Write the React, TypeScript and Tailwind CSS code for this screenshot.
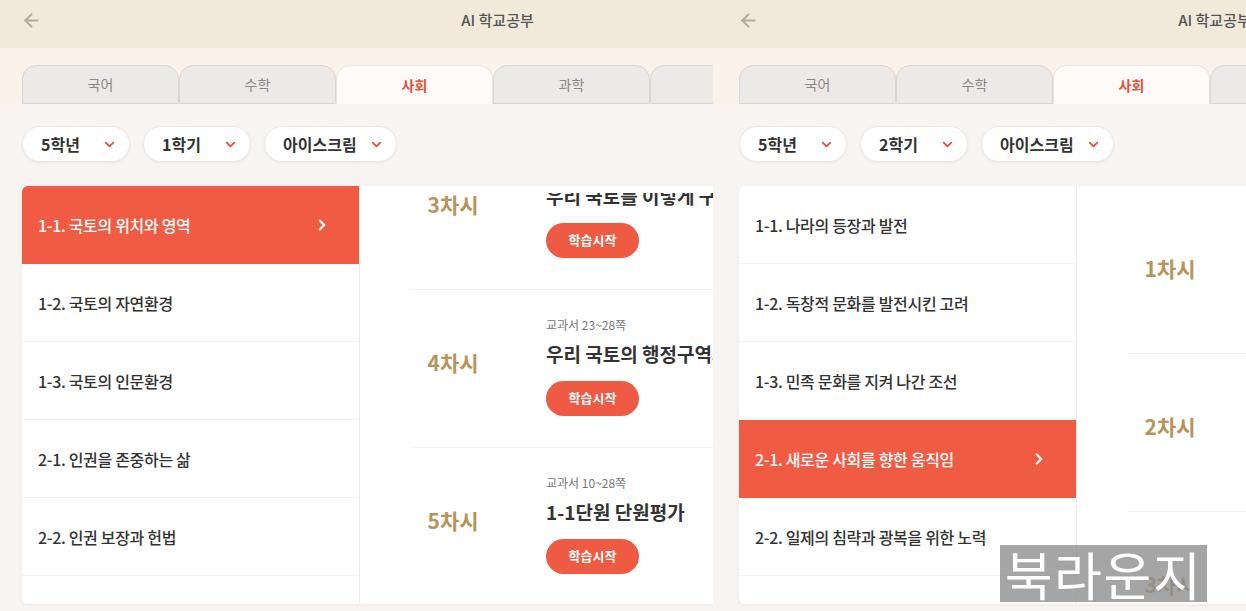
import { ArrowLeft, ChevronDown, ChevronRight } from "lucide-react";

interface Session {
  no: number;
  page: string;
  title: string;
}

interface ScreenProps {
  semester: string;
  units: string[];
  activeUnit: number;
  sessions: Session[];
  listOffset: string;
}

const TABS = ["국어", "수학", "사회", "과학", "영어"];

function Screen({ semester, units, activeUnit, sessions, listOffset }: ScreenProps) {
  return (
    <div className="w-[995px] h-[611px] flex flex-col">
      {/* 상단 헤더 */}
      <div className="h-[48px] shrink-0 bg-[#f3e9db] grid grid-cols-[60px_1fr_60px] items-center pb-[8px]">
        <div className="pl-[21px] text-[#b5ab9c]">
          <ArrowLeft size={21} strokeWidth={2.4} />
        </div>
        <div className="text-center text-[15px] font-medium text-[#555]">AI 학교공부</div>
        <div />
      </div>

      {/* 과목 탭 */}
      <div className="h-[56px] shrink-0 bg-[#faf3ea] pt-[17px] px-[22px] flex">
        {TABS.map((tab) => {
          const active = tab === "사회";
          return (
            <div
              key={tab}
              className={`w-[157px] h-[39px] shrink-0 rounded-t-[14px] flex items-center justify-center text-[14px] ${
                active
                  ? "bg-[#fdfaf7] border border-b-0 border-[#ebe5df] text-[#e5513b] font-semibold"
                  : "bg-[#ebeae8] border border-[#d9d6d3] text-[#8a8784]"
              }`}
            >
              {tab}
            </div>
          );
        })}
      </div>

      {/* 본문 */}
      <div className="flex-1 bg-[#f8f4f1] px-[22px] pt-[22px]">
        <div className="flex gap-[13px]">
          {[
            { label: "5학년", w: "w-[108px]" },
            { label: semester, w: "w-[108px]" },
            { label: "아이스크림", w: "w-[133px]" },
          ].map((p) => (
            <div
              key={p.label}
              className={`${p.w} h-[36px] rounded-full bg-white border border-[#eee7e2] shadow-[0_1px_3px_rgba(0,0,0,0.05)] flex items-center justify-between pl-[18px] pr-[12px]`}
            >
              <span className="text-[16px] font-semibold text-[#333]">{p.label}</span>
              <ChevronDown size={15} strokeWidth={3} className="text-[#e0533d]" />
            </div>
          ))}
        </div>

        <div className="mt-[24px] h-[418px] bg-white rounded-md shadow-[0_1px_4px_rgba(0,0,0,0.05)] flex overflow-hidden">
          {/* 단원 목록 */}
          <div className="w-[337px] shrink-0 flex flex-col">
            {units.map((u, i) => (
              <div
                key={u}
                className={`h-[78px] shrink-0 flex items-center justify-between pl-[16px] pr-[28px] border-b ${
                  i === activeUnit
                    ? "bg-[#f05b44] border-[#f05b44] text-white"
                    : "border-[#f4f1ef] text-[#333]"
                }`}
              >
                <span className="text-[16px] font-medium tracking-[-0.02em] whitespace-nowrap">{u}</span>
                {i === activeUnit && <ChevronRight size={18} strokeWidth={3} />}
              </div>
            ))}
          </div>

          {/* 차시 목록 */}
          <div className="flex-1 border-l border-[#eeeae7] pt-[7px] flex flex-col">
            <div className="flex-1 overflow-hidden">
              <div className={listOffset}>
                {sessions.map((s) => (
                  <div key={s.no}>
                    <div className="h-[157px] flex">
                      <div className="w-[186px] shrink-0 flex items-center justify-center pb-[12px] text-[21px] font-bold text-[#b8935a]">
                        {s.no}차시
                      </div>
                      <div className="flex flex-col justify-center pb-[6px] whitespace-nowrap">
                        <div className="text-[12px] leading-[18px] text-[#777]">{s.page}</div>
                        <div className="mt-[6px] text-[19px] leading-[28px] font-semibold text-[#333]">{s.title}</div>
                        <button className="mt-[13px] w-[93px] h-[35px] rounded-full bg-[#ef5a43] text-white text-[13px] font-bold">
                          학습시작
                        </button>
                      </div>
                    </div>
                    <div className="ml-[50px] h-px bg-[#f4f1ef]" />
                  </div>
                ))}
              </div>
            </div>
          </div>
        </div>
      </div>
    </div>
  );
}

export default function App() {
  return (
    <div className="relative w-[1246px] h-[611px] overflow-hidden flex bg-[#f8f4f1] font-['Noto_Sans_CJK_KR','Noto_Sans',sans-serif]">
      <div className="w-[713px] shrink-0 overflow-hidden">
        <Screen
          semester="1학기"
          units={[
            "1-1. 국토의 위치와 영역",
            "1-2. 국토의 자연환경",
            "1-3. 국토의 인문환경",
            "2-1. 인권을 존중하는 삶",
            "2-2. 인권 보장과 헌법",
            "2-3. 헌법에서 정한 권리와 의무",
          ]}
          activeUnit={0}
          sessions={[
            { no: 3, page: "교과서 18~22쪽", title: "우리 국토를 이렇게 구분해요" },
            { no: 4, page: "교과서 23~28쪽", title: "우리 국토의 행정구역과 도시" },
            { no: 5, page: "교과서 10~28쪽", title: "1-1단원 단원평가" },
          ]}
          listOffset="-mt-[61px]"
        />
      </div>

      <div className="w-[4px] shrink-0 flex flex-col">
        <div className="h-[48px] bg-[#f3e9db]" />
        <div className="h-[56px] bg-[#faf3ea]" />
        <div className="flex-1" />
      </div>

      <div className="flex-1 overflow-hidden">
        <Screen
          semester="2학기"
          units={[
            "1-1. 나라의 등장과 발전",
            "1-2. 독창적 문화를 발전시킨 고려",
            "1-3. 민족 문화를 지켜 나간 조선",
            "2-1. 새로운 사회를 향한 움직임",
            "2-2. 일제의 침략과 광복을 위한 노력",
            "2-3. 대한민국 정부의 수립",
          ]}
          activeUnit={3}
          sessions={[
            { no: 1, page: "교과서 58~61쪽", title: "새로운 사회를 향한 움직임" },
            { no: 2, page: "교과서 62~65쪽", title: "개항과 근대 문물의 수용" },
            { no: 3, page: "교과서 66~69쪽", title: "나라를 지키려는 노력" },
          ]}
          listOffset="mt-[3px]"
        />
      </div>

      {/* 워터마크 */}
      <div className="absolute left-[1000px] top-[545px] w-[207px] h-[57px] bg-[rgba(140,140,140,0.78)] flex items-center justify-center text-white text-[52px] leading-none tracking-[0.03em]">
        북라운지
      </div>
    </div>
  );
}
